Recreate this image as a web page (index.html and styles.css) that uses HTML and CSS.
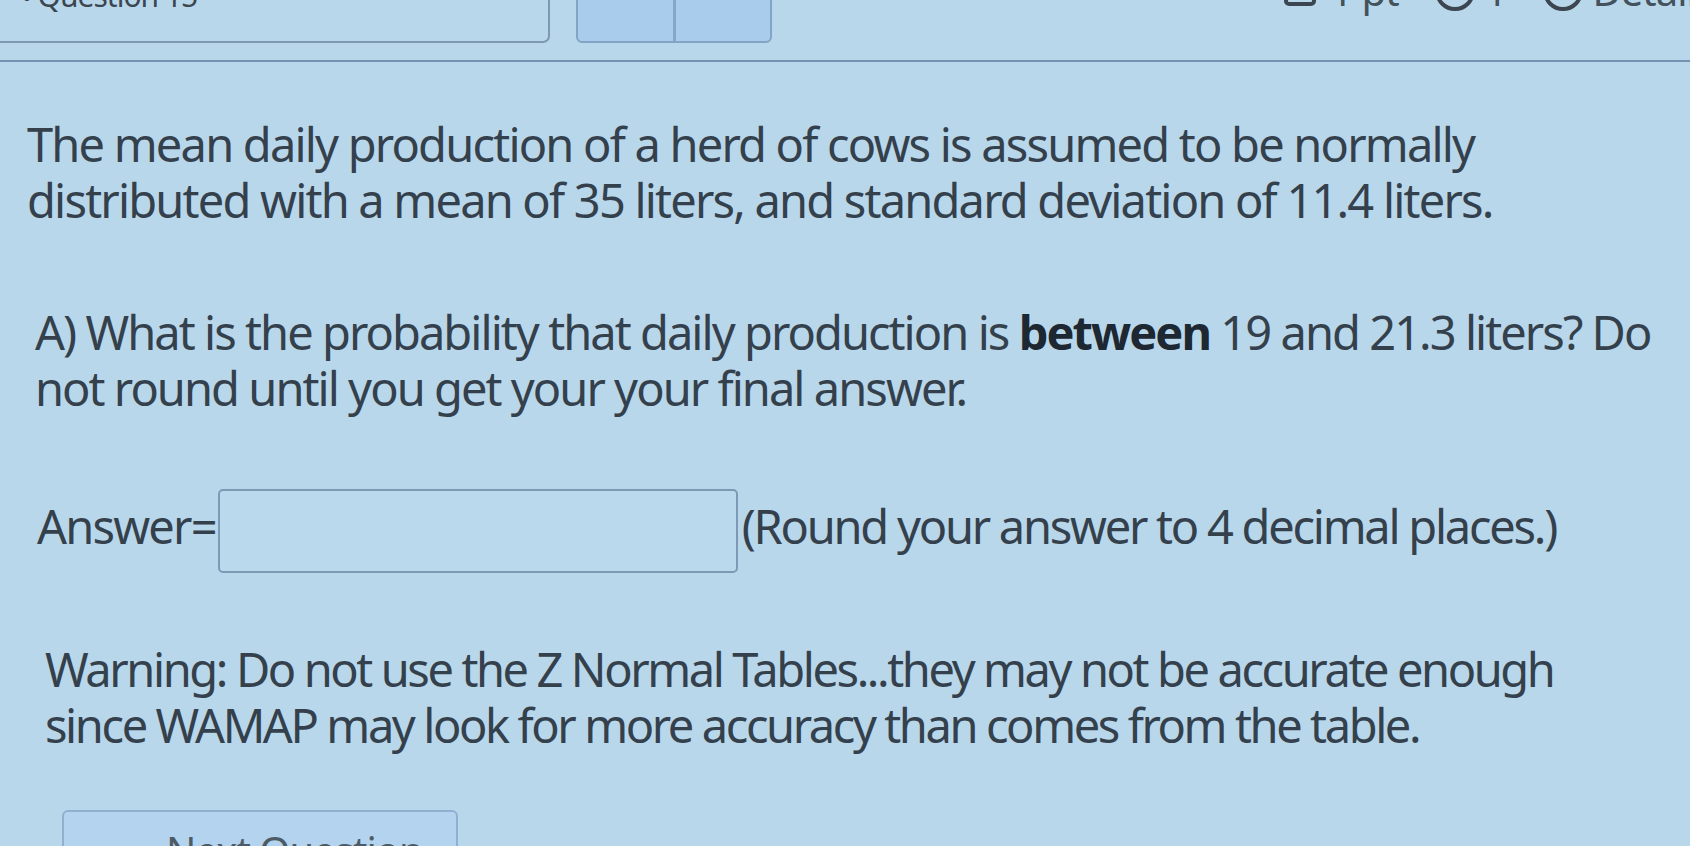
FILE: index.html
```html
<!DOCTYPE html>
<html lang="en">
<head>
<meta charset="utf-8">
<title>Question 15</title>
<link rel="stylesheet" href="styles.css">
</head>
<body>
<header class="topbar">
  <div class="qbox"><span class="bullet">•</span> Question 15</div>
  <div class="navbtns"><span class="nav-half"></span><span class="nav-half"></span></div>
  <div class="meta">
    <span class="sq"></span><span class="meta-txt">1 pt</span>
    <span class="circ"></span><span class="meta-txt">1</span>
    <span class="circ"></span><span class="meta-txt">Details</span>
  </div>
</header>
<hr class="rule">
<main class="question">
  <p class="p1">The mean daily production of a herd of cows is assumed to be normally<br>distributed with a mean of 35 liters, and standard deviation of 11.4 liters.</p>
  <p class="p2">A) What is the probability that daily production is <b>between</b> 19 and 21.3 liters? Do<br>not round until you get your your final answer.</p>
  <div class="answer-row">
    <span class="lbl">Answer=</span>
    <input class="answer" type="text" aria-label="Answer">
    <span class="hint">(Round your answer to 4 decimal places.)</span>
  </div>
  <p class="warn">Warning: Do not use the Z Normal Tables...they may not be accurate enough<br>since WAMAP may look for more accuracy than comes from the table.</p>
  <button class="next" type="button"><span class="tri">►</span> Next Question</button>
</main>
</body>
</html>
```
FILE: styles.css
```css
html, body {
  margin: 0;
  padding: 0;
}
body {
  background: #b9d7eb;
  color: #34414c;
  font-family: "Noto Sans", "Open Sans", sans-serif;
  overflow: hidden;
  height: 846px;
}
.topbar {
  display: flex;
  align-items: flex-end;
  height: 43px;
  overflow: hidden;
}
.qbox {
  flex: none;
  width: 550px;
  height: 64px;
  box-sizing: border-box;
  border: 2px solid #7d98b3;
  border-left: none;
  border-radius: 0 0 7px 0;
  font-size: 30px;
  letter-spacing: -1px;
  padding-left: 22px;
  line-height: 30px;
  color: #3b4650;
}
.bullet { font-size: 26px; }
.navbtns {
  flex: none;
  display: flex;
  margin-left: 26px;
  width: 196px;
  height: 64px;
  box-sizing: border-box;
  border: 2px solid #83a4c5;
  border-radius: 0 0 6px 6px;
  background: #a9cbec;
}
.nav-half { flex: 1; }
.nav-half + .nav-half { border-left: 3px solid #86a7c7; }
.meta {
  flex: none;
  margin-left: auto;
  margin-right: -24px;
  display: flex;
  align-items: center;
  height: 43px;
  margin-bottom: 31px;
  font-size: 40px;
  color: #44525c;
  letter-spacing: -1px;
}
.sq {
  width: 32px; height: 30px;
  border: 4px solid #3b4650;
  border-radius: 5px;
  margin-right: 14px;
  box-sizing: border-box;
}
.circ {
  width: 40px; height: 40px;
  border: 4px solid #3b4650;
  border-radius: 50%;
  box-sizing: border-box;
  margin: 0 10px 0 36px;
}
.meta-txt { line-height: 43px; }
.rule {
  margin: 17px 0 0;
  border: none;
  height: 2px;
  background: #7592b0;
}
.question {
  font-size: 47px;
  line-height: 56px;
  letter-spacing: -1.8px;
}
.question p { margin: 0; }
.p1 { padding: 54px 0 0 27px; }
.p2 { padding: 76px 0 0 35px; letter-spacing: -1.95px; }
.p2 b { color: #1d2832; font-weight: 700; }
.answer-row {
  display: flex;
  align-items: center;
  margin: 73px 0 0 37px;
}
.answer {
  width: 520px;
  height: 84px;
  box-sizing: border-box;
  border: 2px solid #7c9ab6;
  border-radius: 5px;
  background: #bbd9ed;
  margin: 0 4px 0 2px;
  font: inherit;
}
.lbl, .hint { position: relative; top: -5px; }
.hint { letter-spacing: -2.25px; }
.warn { padding: 68px 0 0 45px; letter-spacing: -2.4px; }
.next {
  display: block;
  margin: 57px 0 0 62px;
  width: 396px;
  height: 80px;
  box-sizing: border-box;
  border: 2px solid #8fb0cf;
  border-radius: 6px;
  background: #b3d3ee;
  color: #4d5b66;
  font-family: inherit;
  font-size: 40px;
  text-align: left;
  padding: 0 0 0 56px;
  letter-spacing: -1px;
}
.tri { font-size: 28px; margin-right: 10px; }
```
